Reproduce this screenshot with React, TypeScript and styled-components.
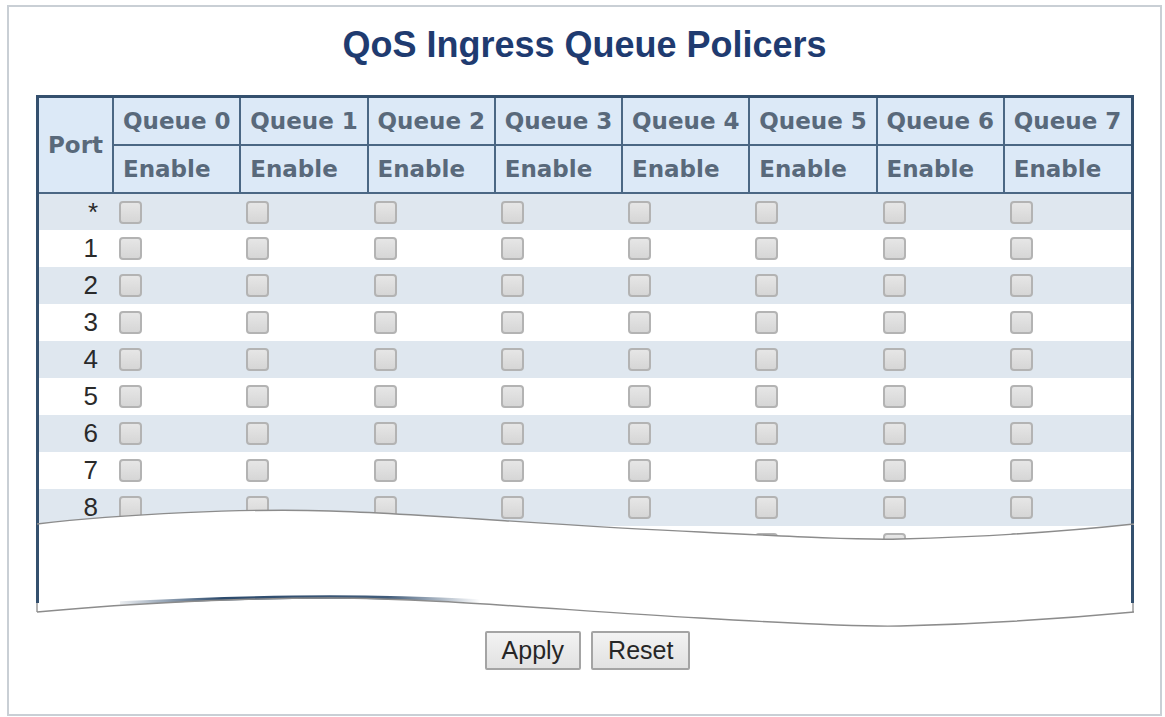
import styled, { createGlobalStyle } from "styled-components";

const GlobalStyle = createGlobalStyle`
    html, body {
        margin: 0;
        padding: 0;
        background: #ffffff;
        overflow: hidden;
    }
`;

const Frame = styled.div`
    box-sizing: border-box;
    width: 1155px;
    height: 711px;
    margin: 5px 0 0 7px;
    border: 2px solid #c9cfd5;
    background: #ffffff;
    display: flex;
    flex-direction: column;
`;

const Title = styled.h1`
    margin: 20px 0 0 0;
    font-family: "Liberation Sans", Arial, sans-serif;
    font-size: 36px;
    line-height: 36px;
    font-weight: bold;
    color: #1f3b70;
    text-align: center;
`;

const TableWrap = styled.div`
    position: relative;
    box-sizing: border-box;
    width: 1098px;
    margin: 32px 0 0 27px;
    border: 3px solid #34506e;
`;

const Grid = styled.table`
    width: 100%;
    table-layout: fixed;
    border-collapse: collapse;
    border-spacing: 0;
`;

const HeadCell = styled.th<{ $last?: boolean }>`
    height: 46px;
    padding: 0 0 0 9px;
    background: #dce9f7;
    border-bottom: 2px solid #4b6784;
    border-right: ${(p) => (p.$last ? "none" : "2px solid #4b6784")};
    font-family: "DejaVu Sans", Verdana, sans-serif;
    font-size: 23px;
    font-weight: bold;
    color: #59697b;
    text-align: left;
    white-space: nowrap;
`;

const BodyRow = styled.tr<{ $alt: boolean }>`
    height: 37px;
    background: ${(p) => (p.$alt ? "#dfe7ef" : "#ffffff")};
`;

const PortCell = styled.td`
    padding: 0 15px 0 0;
    text-align: right;
    font-family: "Liberation Sans", Arial, sans-serif;
    font-size: 26px;
    color: #2a2a2a;
`;

const BoxCell = styled.td`
    padding: 0 0 0 6px;
    vertical-align: middle;
`;

const Check = styled.input`
    appearance: none;
    display: block;
    box-sizing: border-box;
    width: 23px;
    height: 23px;
    margin: 0;
    border: 2px solid #b3b3b3;
    border-radius: 4px;
    background: linear-gradient(#e6e6e6, #d6d6d6);
`;

const TearOverlay = styled.svg`
    position: absolute;
    left: -8px;
    top: 402px;
    width: 1106px;
    height: 135px;
    pointer-events: none;
`;

const ButtonBar = styled.div`
    display: flex;
    justify-content: center;
    gap: 10px;
    margin-top: 28px;
    padding-left: 6px;
`;

const Button = styled.button`
    box-sizing: border-box;
    height: 39px;
    padding: 0 15px;
    border: 2px solid #a4a4a4;
    border-radius: 2px;
    background: linear-gradient(#f3f3f3, #e1e1e1);
    font-family: "Liberation Sans", Arial, sans-serif;
    font-size: 25px;
    color: #262626;
`;

const queues = [0, 1, 2, 3, 4, 5, 6, 7];
const ports = ["*", "1", "2", "3", "4", "5", "6", "7", "8", "9", "10"];

// torn-page edges, in page coordinates
const upperEdge =
    "M37,524 C120,514 250,508 330,511 C430,514 560,526 700,532 C800,537 860,540 900,539 C980,537 1060,532 1134,524";
const lowerEdge =
    "M37,612 C100,606 220,598 330,598 C430,598 560,610 700,618 C800,624 860,627 900,626 C980,624 1070,618 1134,612";
const gapFill =
    "M35,524 L37,524 C120,514 250,508 330,511 C430,514 560,526 700,532 C800,537 860,540 900,539 C980,537 1060,532 1134,524 L1136,524 " +
    "L1136,617 C1070,623 980,629 900,631 C860,632 800,629 700,623 C560,615 430,603 330,603 C220,603 100,611 35,617 Z";

function Tear() {
    return (
        <TearOverlay viewBox="31 500 1106 135">
            <defs>
                <linearGradient id="edgeFade" x1="110" x2="480" y1="0" y2="0" gradientUnits="userSpaceOnUse">
                    <stop offset="0" stopColor="#2c4a6c" stopOpacity="0" />
                    <stop offset="0.3" stopColor="#2c4a6c" stopOpacity="1" />
                    <stop offset="0.75" stopColor="#2c4a6c" stopOpacity="0.9" />
                    <stop offset="1" stopColor="#2c4a6c" stopOpacity="0" />
                </linearGradient>
            </defs>
            <path d={gapFill} fill="#ffffff" />
            <line x1="37.5" y1="524" x2="37.5" y2="603" stroke="#34506e" strokeWidth="3" />
            <line x1="1132.5" y1="525" x2="1132.5" y2="603" stroke="#34506e" strokeWidth="3" />
            <line x1="37" y1="603" x2="37" y2="612" stroke="#8a8a8a" strokeWidth="1.3" />
            <line x1="1133" y1="603" x2="1133" y2="612" stroke="#8a8a8a" strokeWidth="1.3" />
            <path d={upperEdge} fill="none" stroke="#8c8c8c" strokeWidth="1.4" />
            <path d="M120,603 C200,599 260,597 330,597 C400,597 440,599 480,601" fill="none" stroke="url(#edgeFade)" strokeWidth="3.5" />
            <path d={lowerEdge} fill="none" stroke="#8c8c8c" strokeWidth="1.4" />
        </TearOverlay>
    );
}

function App() {
    return (
        <>
            <GlobalStyle />
            <Frame>
                <Title>QoS Ingress Queue Policers</Title>
                <TableWrap>
                    <Grid>
                        <colgroup>
                            <col style={{ width: 74 }} />
                            {queues.map((q) => (
                                <col key={q} />
                            ))}
                        </colgroup>
                        <thead>
                            <tr>
                                <HeadCell rowSpan={2}>Port</HeadCell>
                                {queues.map((q) => (
                                    <HeadCell key={q} $last={q === 7}>Queue {q}</HeadCell>
                                ))}
                            </tr>
                            <tr>
                                {queues.map((q) => (
                                    <HeadCell key={q} $last={q === 7}>Enable</HeadCell>
                                ))}
                            </tr>
                        </thead>
                        <tbody>
                            {ports.map((port, i) => (
                                <BodyRow key={port} $alt={i % 2 === 0}>
                                    <PortCell>{port}</PortCell>
                                    {queues.map((q) => (
                                        <BoxCell key={q}>
                                            <Check type="checkbox" />
                                        </BoxCell>
                                    ))}
                                </BodyRow>
                            ))}
                        </tbody>
                    </Grid>
                    <Tear />
                </TableWrap>
                <ButtonBar>
                    <Button>Apply</Button>
                    <Button>Reset</Button>
                </ButtonBar>
            </Frame>
        </>
    );
}

export default App;
